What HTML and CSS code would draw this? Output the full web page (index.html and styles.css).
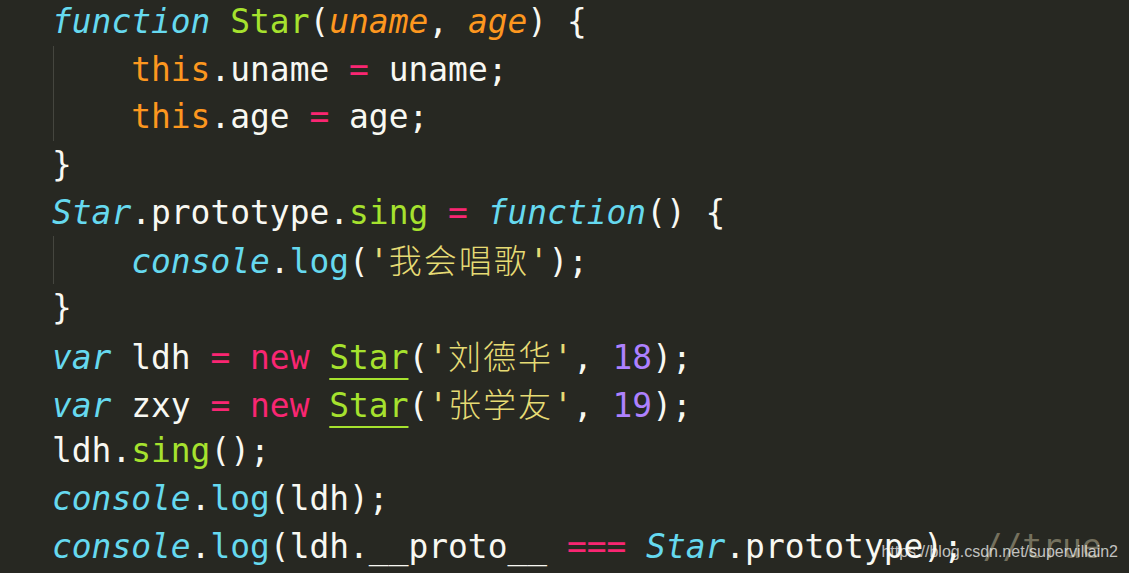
FILE: index.html
```html
<!DOCTYPE html>
<html lang="zh-CN">
<head>
<meta charset="utf-8">
<title>Star prototype</title>
<link rel="stylesheet" href="styles.css">
</head>
<body>
<div class="editor">
  <div class="code">
    <div class="line"><i class="kw">function</i> <span class="fn">Star</span>(<i class="pa">uname</i>, <i class="pa">age</i>) {</div>
    <div class="line guide">    <span class="th">this</span>.uname <span class="op">=</span> uname;</div>
    <div class="line guide">    <span class="th">this</span>.age <span class="op">=</span> age;</div>
    <div class="line">}</div>
    <div class="line"><i class="kw">Star</i>.prototype.<span class="fn">sing</span> <span class="op">=</span> <i class="kw">function</i>() {</div>
    <div class="line guide">    <i class="kw">console</i>.<span class="sup">log</span>(<span class="str">'<span class="cjk">我会唱歌</span>'</span>);</div>
    <div class="line">}</div>
    <div class="line"><i class="kw">var</i> ldh <span class="op">=</span> <span class="op">new</span> <span class="fn ul">Star</span>(<span class="str">'<span class="cjk">刘德华</span>'</span>, <span class="num">18</span>);</div>
    <div class="line"><i class="kw">var</i> zxy <span class="op">=</span> <span class="op">new</span> <span class="fn ul">Star</span>(<span class="str">'<span class="cjk">张学友</span>'</span>, <span class="num">19</span>);</div>
    <div class="line">ldh.<span class="fn">sing</span>();</div>
    <div class="line"><i class="kw">console</i>.<span class="sup">log</span>(ldh);</div>
    <div class="line"><i class="kw">console</i>.<span class="sup">log</span>(ldh.__proto__ <span class="op">===</span> <i class="kw">Star</i>.prototype); <span class="cm">//true</span></div>
  </div>
  <div class="watermark">https://blog.csdn.net/supervillain2</div>
</div>
</body>
</html>
```
FILE: styles.css
```css
html, body {
  margin: 0;
  padding: 0;
  background: #272822;
  overflow: hidden;
}
.editor {
  position: relative;
  width: 1129px;
  height: 573px;
  overflow: hidden;
  background: #272822;
}
.code {
  margin-top: -2px;
  padding-left: 52px;
  font-family: "DejaVu Sans Mono", "Noto Sans CJK SC", monospace;
  font-size: 32.9px;
  line-height: 47.7px;
  color: #f8f8f2;
}
.line {
  white-space: pre;
  height: 47.7px;
}
.guide {
  background-image: linear-gradient(#45463f, #45463f);
  background-repeat: no-repeat;
  background-size: 1px 100%;
  background-position: 1px 0;
}
i { font-style: italic; }
.kw { color: #66d9ef; }
.sup { color: #66d9ef; }
.fn { color: #a6e22e; }
.pa { color: #fd971f; }
.th { color: #fd971f; }
.op { color: #f92672; }
.str { color: #e6db74; }
.num { color: #ae81ff; }
.cm { color: #75715e; }
.cjk {
  font-family: "Noto Sans CJK SC", sans-serif;
  font-size: 33px;
  font-weight: 300;
  letter-spacing: 2px;
}
.ul {
  text-decoration: underline;
  text-decoration-color: #a6e22e;
  text-decoration-thickness: 2px;
  text-underline-offset: 9px;
}
.watermark {
  position: absolute;
  top: 543px;
  right: 11px;
  font-family: "Liberation Sans", Arial, sans-serif;
  font-size: 16px;
  line-height: 18px;
  color: rgba(255, 255, 255, 0.72);
}
```
